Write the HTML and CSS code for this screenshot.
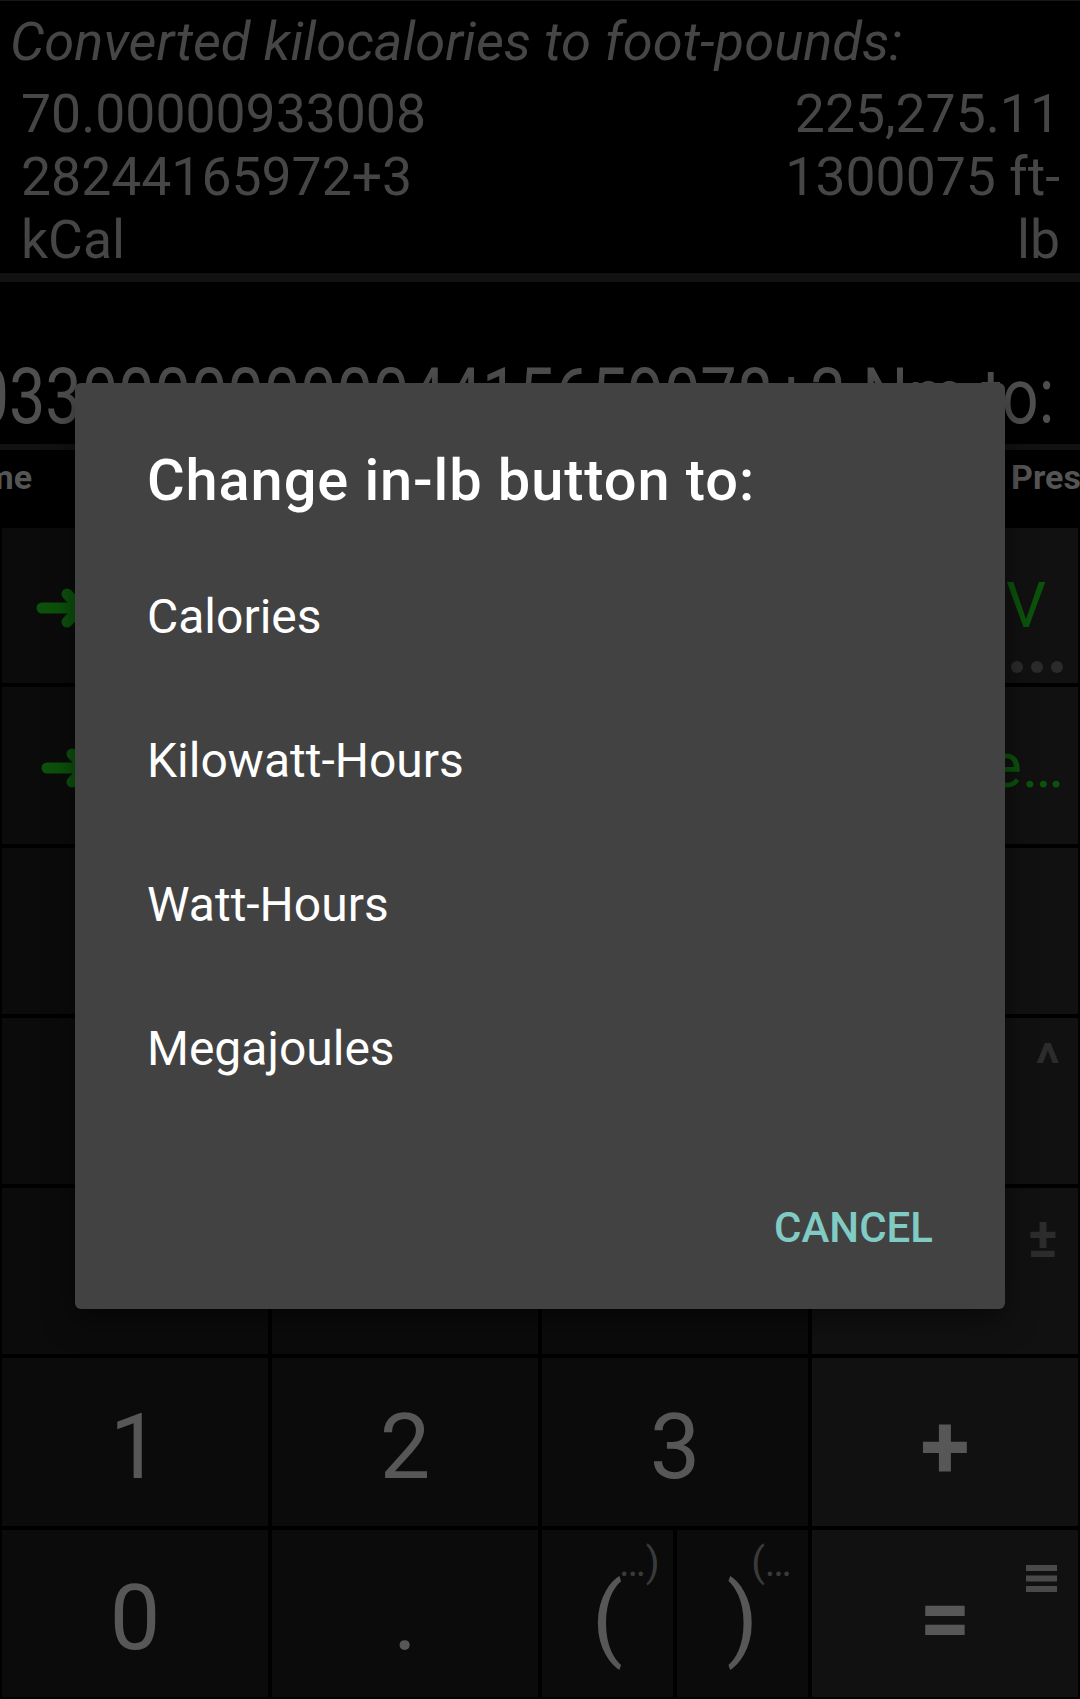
FILE: index.html
```html
<!DOCTYPE html>
<html lang="en">
<head>
<meta charset="utf-8">
<title>Converter</title>
<link rel="stylesheet" href="styles.css">
</head>
<body>
<div class="app">
  <section class="result">
    <p class="result-title">Converted kilocalories to foot-pounds:</p>
    <div class="result-values">
      <p class="val">70.00000933008<br>28244165972+3<br>kCal</p>
      <p class="val val-to">225,275.11<br>1300075 ft-<br>lb</p>
    </div>
  </section>
  <div class="sep-thick"></div>
  <section class="display">
    <span class="display-text">0330000000004415659078+3 Nm to:</span>
  </section>
  <div class="sep-thin"></div>
  <nav class="tabs">
    <div class="tab tab-start"><span>Time</span></div>
    <div class="tab tab-end"><span>Presets</span></div>
  </nav>
  <section class="keypad">
    <div class="key fn"><svg class="arrow" width="54" height="40" viewBox="0 0 54 40"><path d="M6 20 H45 M31 6 L45 20 L31 34"/></svg><span>kCal</span></div>
    <div class="key"></div>
    <div class="key"></div>
    <div class="key op fn-right">eV<span class="dots"><i></i><i></i><i></i><i></i><i></i></span></div>

    <div class="key fn fn-alt"><svg class="arrow" width="54" height="40" viewBox="0 0 54 40"><path d="M6 20 H45 M31 6 L45 20 L31 34"/></svg><span>ft-lb</span></div>
    <div class="key"></div>
    <div class="key"></div>
    <div class="key op fn-right more">More…</div>

    <div class="key">C</div>
    <div class="key">⌫</div>
    <div class="key">%</div>
    <div class="key op">÷</div>

    <div class="key">7</div>
    <div class="key">8</div>
    <div class="key">9</div>
    <div class="key op bold">×<span class="hint hint-caret">^</span></div>

    <div class="key">4</div>
    <div class="key">5</div>
    <div class="key">6</div>
    <div class="key op bold">−<span class="hint hint-pm">±</span></div>

    <div class="key">1</div>
    <div class="key">2</div>
    <div class="key">3</div>
    <div class="key op bold">+</div>

    <div class="key">0</div>
    <div class="key">.</div>
    <div class="paren-pair">
      <div class="key thin"><span class="paren">(<span class="sup sup-open">…)</span></span></div>
      <div class="key thin"><span class="paren">)<span class="sup sup-close">(…</span></span></div>
    </div>
    <div class="key op bold">=<svg class="hint hint-menu" width="31" height="27" viewBox="0 0 31 27"><rect x="0" y="0" width="31" height="6"/><rect x="0" y="10.5" width="31" height="6"/><rect x="0" y="21" width="31" height="6"/></svg></div>
  </section>
</div>

<div class="dialog" role="dialog">
  <h2 class="dialog-title">Change in-lb button to:</h2>
  <ul class="dialog-list">
    <li class="dialog-item">Calories</li>
    <li class="dialog-item">Kilowatt-Hours</li>
    <li class="dialog-item">Watt-Hours</li>
    <li class="dialog-item">Megajoules</li>
  </ul>
  <div class="dialog-actions">
    <span class="btn">CANCEL</span>
  </div>
</div>
</body>
</html>
```
FILE: styles.css
```css
html, body {
  margin: 0;
  padding: 0;
}
body {
  background: #000;
  width: 1080px;
  height: 1699px;
  overflow: hidden;
  font-family: Roboto, "Noto Sans", sans-serif;
}

/* result header */
.result {
  border-top: 1px solid #171717;
  padding-top: 10px;
}
.result-title {
  margin: 0;
  padding-left: 10px;
  font-style: italic;
  font-size: 54.3px;
  line-height: 62px;
  color: #464646;
  white-space: nowrap;
}
.result-values {
  display: flex;
  justify-content: space-between;
  margin-top: 9px;
  padding: 0 20px 0 21px;
}
.val {
  margin: 0;
  font-size: 53.5px;
  line-height: 63px;
  color: #464646;
  white-space: nowrap;
}
.val-to {
  text-align: right;
}
.sep-thick {
  margin-top: 2px;
  height: 9px;
  background: #121212;
}

/* big display */
.display {
  height: 162px;
  box-sizing: border-box;
  display: flex;
  justify-content: flex-end;
  align-items: flex-end;
  overflow: hidden;
  padding: 0 26px 8px 0;
}
.display-text {
  flex-shrink: 0;
  font-size: 78px;
  line-height: 78px;
  color: #4f4f4f;
  white-space: nowrap;
  transform: scaleX(0.83);
  transform-origin: right bottom;
}
.sep-thin {
  height: 6px;
  background: #121212;
}

/* tabs */
.tabs {
  height: 78px;
  box-sizing: border-box;
  padding-top: 7px;
  display: flex;
  justify-content: space-between;
  align-items: flex-start;
  overflow: hidden;
  font-size: 34px;
  font-weight: 700;
  color: #555;
  white-space: nowrap;
}
.tab {
  overflow: hidden;
  display: flex;
}
.tab-start {
  width: 32px;
  justify-content: flex-end;
}
.tab-end {
  width: 69px;
  justify-content: flex-start;
}

/* keypad */
.keypad {
  display: grid;
  grid-template-columns: repeat(4, 266px);
  grid-template-rows: 155px 157px 166px 166px 166px 168px 167px;
  gap: 4px;
  padding: 0 2px;
}
.key {
  position: relative;
  background: #0b0b0b;
  display: flex;
  align-items: center;
  justify-content: center;
  box-sizing: border-box;
  padding-top: 10px;
  color: #575757;
  font-size: 90px;
  line-height: normal;
}
.key.op {
  background: #111;
}
.key.bold {
  font-weight: 700;
}
.key.fn {
  justify-content: flex-start;
  padding: 5px 0 0 34px;
  gap: 14px;
  font-size: 63px;
  color: #0c520c;
}
.key.fn-alt {
  padding-left: 39px;
}
.arrow path {
  fill: none;
  stroke: #0c520c;
  stroke-width: 11;
  stroke-linecap: round;
  stroke-linejoin: round;
}
.key.fn-right {
  justify-content: flex-end;
  padding: 0 32px 0 0;
  font-size: 63px;
  color: #0c520c;
  overflow: hidden;
}
.key.more {
  padding-right: 14px;
}
.dots {
  position: absolute;
  right: 15px;
  bottom: 10px;
  display: flex;
  gap: 8px;
}
.dots i {
  width: 12px;
  height: 12px;
  border-radius: 50%;
  background: #2b2b2b;
}
.hint {
  position: absolute;
  color: #2c2c2c;
  font-size: 56px;
  font-weight: 700;
  line-height: 1;
}
.hint-caret {
  top: 18px;
  right: 18px;
}
.hint-pm {
  top: 22px;
  right: 20px;
}
.hint-menu {
  top: 35px;
  right: 21px;
  fill: #4a4a4a;
}
.paren-pair {
  display: flex;
  gap: 4px;
}
.paren-pair .key {
  flex: 1;
}
.paren {
  position: relative;
}
.sup {
  position: absolute;
  top: -23px;
  font-size: 40px;
  line-height: 1;
  color: #3a3a3a;
  white-space: nowrap;
}
.sup-open {
  left: calc(100% - 4px);
}
.sup-close {
  left: calc(100% - 7px);
}

/* dialog */
.dialog {
  position: absolute;
  left: 75px;
  top: 383px;
  width: 930px;
  height: 926px;
  box-sizing: border-box;
  padding-top: 63px;
  background: #424242;
  border-radius: 6px;
  box-shadow: 0 10px 30px rgba(0, 0, 0, 0.5);
  color: #fff;
}
.dialog-title {
  margin: 0;
  padding: 0 72px 0 72px;
  font-size: 57.75px;
  font-weight: 500;
  letter-spacing: 0.9px;
  line-height: 68px;
  white-space: nowrap;
}
.dialog-list {
  list-style: none;
  margin: 30px 0 0;
  padding: 0;
}
.dialog-item {
  height: 144px;
  display: flex;
  align-items: center;
  padding-left: 72px;
  font-size: 48px;
}
.dialog-actions {
  display: flex;
  justify-content: flex-end;
  padding-right: 72px;
  margin-top: 83px;
}
.btn {
  font-size: 42px;
  font-weight: 500;
  line-height: normal;
  color: #80cbc4;
}
```
